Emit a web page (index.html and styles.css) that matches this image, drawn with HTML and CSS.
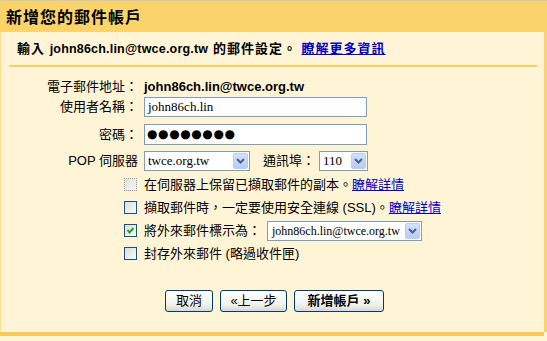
FILE: index.html
```html
<!DOCTYPE html>
<html lang="zh-Hant">
<head>
<meta charset="utf-8">
<link rel="stylesheet" href="styles.css">
</head>
<body>
<div class="page">
  <div class="title">新增您的郵件帳戶</div>
  <div class="content">
    <div class="intro">輸入 <span class="lat">john86ch.lin@twce.org.tw</span> 的郵件設定。 <a href="#" class="more">瞭解更多資訊</a></div>
    <div class="sep"></div>
    <div class="form">
      <div class="row r-email">
        <div class="label">電子郵件地址：</div>
        <div class="value">john86ch.lin@twce.org.tw</div>
      </div>
      <div class="row r-user">
        <div class="label">使用者名稱：</div>
        <div class="field">john86ch.lin</div>
      </div>
      <div class="row r-pass">
        <div class="label">密碼：</div>
        <div class="field dots">●●●●●●●●</div>
      </div>
      <div class="row r-pop">
        <div class="label"><span class="lat-r">POP</span> 伺服器</div>
        <div class="select s-pop"><span class="sv">twce.org.tw</span><span class="btn"><svg width="9" height="6" viewBox="0 0 9 6"><path d="M1 1 L4.5 4.5 L8 1" fill="none" stroke="#4d6185" stroke-width="2"/></svg></span></div>
        <div class="plabel">通訊埠：</div>
        <div class="select s-port"><span class="sv">110</span><span class="btn"><svg width="9" height="6" viewBox="0 0 9 6"><path d="M1 1 L4.5 4.5 L8 1" fill="none" stroke="#4d6185" stroke-width="2"/></svg></span></div>
      </div>
      <div class="row crow">
        <span class="cb cb-dis"></span>
        <span class="ctext">在伺服器上保留已擷取郵件的副本。<a href="#">瞭解詳情</a></span>
      </div>
      <div class="row crow">
        <span class="cb"></span>
        <span class="ctext">擷取郵件時，一定要使用安全連線 (<span class="lat-r">SSL</span>)。<a href="#">瞭解詳情</a></span>
      </div>
      <div class="row crow">
        <span class="cb"><svg width="11" height="11" viewBox="0 0 11 11"><path d="M2.5 5 L4.5 7.5 L8.5 3" fill="none" stroke="#21a121" stroke-width="2"/></svg></span>
        <span class="ctext">將外來郵件標示為：</span>
        <div class="select s-label"><span class="sv sv-small">john86ch.lin@twce.org.tw</span><span class="btn"><svg width="9" height="6" viewBox="0 0 9 6"><path d="M1 1 L4.5 4.5 L8 1" fill="none" stroke="#4d6185" stroke-width="2"/></svg></span></div>
      </div>
      <div class="row crow">
        <span class="cb"></span>
        <span class="ctext">封存外來郵件 (略過收件匣)</span>
      </div>
      <div class="buttons">
        <button class="b b-cancel">取消</button>
        <button class="b b-back">«上一步</button>
        <button class="b b-add">新增帳戶 »</button>
      </div>
    </div>
  </div>
  <div class="bottom"></div>
</div>
</body>
</html>
```
FILE: styles.css
```css
html, body {
  margin: 0;
  padding: 0;
  background: #fff5d6;
}
body {
  font-family: "Liberation Sans", "Noto Sans CJK TC", sans-serif;
  color: #000;
  font-size: 13px;
}
.page {
  width: 547px;
  height: 341px;
  overflow: hidden;
  border-top: 1px solid #cfcbbd;
  box-sizing: border-box;
}
.title {
  height: 31px;
  background: #fad36b;
  font-weight: bold;
  font-size: 16px;
  line-height: 16px;
  padding: 9px 0 0 6px;
  box-sizing: border-box;
  letter-spacing: 1px;
}
.content {
  width: 547px;
  height: 300px;
  box-sizing: border-box;
  border-left: 1px solid #fbe090;
  border-right: 3px solid #f4d27a;
  display: flex;
  flex-direction: column;
}
.intro {
  font-weight: bold;
  font-size: 13px;
  line-height: 14px;
  padding: 10px 0 0 16px;
  height: 24px;
  box-sizing: border-box;
  letter-spacing: 1px;
  white-space: nowrap;
}
.intro .lat {
  font-size: 12.5px;
  letter-spacing: 0.2px;
}
.intro a.more {
  color: #0000cc;
}
.sep {
  height: 2px;
  background: #f8cd66;
  margin: 9px 7px 0 8px;
}
.form {
  display: flex;
  flex-direction: column;
  padding-top: 10px;
}
.row {
  display: flex;
  align-items: center;
}
.label {
  width: 137px;
  text-align: right;
  padding-right: 6px;
  line-height: 16px;
  white-space: nowrap;
}
.r-email { height: 20px; }
.value {
  font-weight: bold;
  font-size: 13px;
  line-height: 16px;
}
.r-user { height: 20px; }
.r-pass { height: 21px; margin-top: 7px; }
.r-pop { height: 20px; margin-top: 6px; }
.field {
  width: 223px;
  height: 100%;
  box-sizing: border-box;
  border: 1px solid #7f9db9;
  background: #fff;
  font-family: "Liberation Serif", serif;
  font-size: 13px;
  line-height: 18px;
  padding-left: 3px;
}
.dots {
  font-family: "DejaVu Sans", sans-serif;
  font-size: 12px;
  letter-spacing: 0.6px;
  line-height: 19px;
  padding-left: 2px;
}
.select {
  height: 20px;
  box-sizing: border-box;
  border: 1px solid #7f9db9;
  background: #fff;
  display: flex;
  align-items: center;
  justify-content: space-between;
  padding: 1px;
}
.sv {
  font-family: "Liberation Serif", serif;
  font-size: 13px;
  line-height: 16px;
  padding-left: 2px;
  white-space: nowrap;
}
.sv-small {
  font-size: 12px;
  padding-left: 3px;
}
.btn {
  width: 15px;
  height: 16px;
  box-sizing: border-box;
  border: 1px solid #b9cdf5;
  border-radius: 2px;
  background: linear-gradient(#d4e1fc, #b7cbf6);
  display: flex;
  align-items: center;
  justify-content: center;
  flex: none;
}
.s-pop { width: 106px; }
.plabel {
  margin-left: 13px;
  margin-right: 4px;
  line-height: 16px;
}
.s-port { width: 49px; }
.crow {
  height: 23px;
  padding-left: 123px;
}
.r-pop + .crow { margin-top: 2px; }
.cb {
  width: 13px;
  height: 13px;
  box-sizing: border-box;
  border: 1px solid #1c5180;
  background: linear-gradient(135deg, #dcdcd7, #fbfbf9);
  margin-right: 7px;
  display: flex;
  align-items: center;
  justify-content: center;
  flex: none;
}
.cb-dis {
  border: 1px dotted #9a9a96;
  background: linear-gradient(135deg, #e0e0dc, #f6f6f4);
}
.ctext {
  line-height: 16px;
  white-space: nowrap;
}
.ctext a {
  color: #0000cc;
}
.s-label {
  width: 155px;
  margin-left: 6px;
}
.buttons {
  display: flex;
  gap: 7px;
  padding-left: 164px;
  margin-top: 25px;
}
.b {
  height: 22px;
  box-sizing: border-box;
  border: 1px solid #003c74;
  border-radius: 3px;
  background: linear-gradient(#ffffff, #f1f1ec 70%, #d8d8cf);
  font-family: "Liberation Sans", "Noto Sans CJK TC", sans-serif;
  font-size: 13px;
  line-height: 16px;
  padding: 0;
  color: #000;
}
.b-cancel { width: 48px; }
.b-back { width: 67px; }
.b-add { width: 90px; font-weight: bold; }
.bottom {
  height: 4px;
  background: #f8c85c;
  width: 544px;
}
```
